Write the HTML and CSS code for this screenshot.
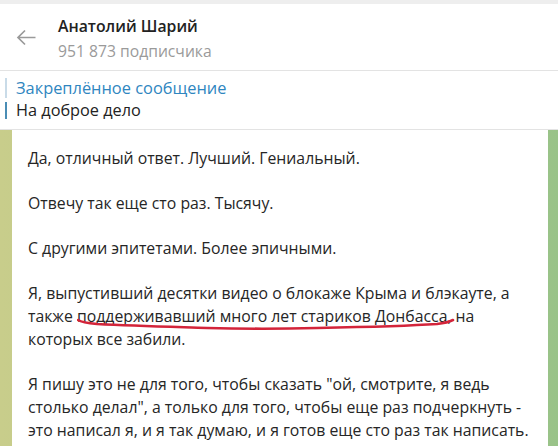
FILE: index.html
```html
<!DOCTYPE html>
<html lang="ru">
<head>
    <meta charset="UTF-8">
    <meta name="viewport" content="width=device-width, initial-scale=1.0">
    <title>Анатолий Шарий</title>
    <link rel="stylesheet" href="styles.css">
</head>
<body>

    <div class="topbar"></div>

    <div class="header">
        <div class="back">
            <svg width="20" height="17" viewBox="0 0 20 17">
                <path d="M19.5 8.5H2M9 1.5L2 8.5l7 7" fill="none" stroke="#9a9a9a" stroke-width="1.7"/>
            </svg>
        </div>
        <div class="channel">
            <div class="name">Анатолий Шарий</div>
            <div class="subs">951 873 подписчика</div>
        </div>
    </div>

    <div class="pinned">
        <div class="bars">
            <span class="bar light"></span>
            <span class="bar dark"></span>
        </div>
        <div class="pinned-text">
            <div class="pinned-title">Закреплённое сообщение</div>
            <div class="pinned-msg">На доброе дело</div>
        </div>
    </div>

    <div class="chat">
        <div class="bubble">
            <p>Да, отличный ответ. Лучший. Гениальный.</p>
            <p>Отвечу так еще сто раз. Тысячу.</p>
            <p>С другими эпитетами. Более эпичными.</p>
            <p>Я, выпустивший десятки видео о блокаже Крыма и блэкауте, а<br>
               также поддерживавший много лет стариков Донбасса, на<br>
               которых все забили.</p>
            <p>Я пишу это не для того, чтобы сказать "ой, смотрите, я ведь<br>
               столько делал", а только для того, чтобы еще раз подчеркнуть -<br>
               это написал я, и я так думаю, и я готов еще сто раз так написать.</p>

            <!-- red marker line drawn over the text -->
            <svg class="scribble" width="400" height="14" viewBox="0 0 400 14">
                <path d="M1 2 C4 4 8 5 20 6 C60 8 100 9 130 10 C170 11 200 11 240 10 C290 9 330 8 360 6 C368 5 372 4 376 2"
                      fill="none" stroke="#d3243a" stroke-width="2.6" stroke-linecap="round"/>
            </svg>
        </div>
    </div>

</body>
</html>
```

FILE: styles.css
```css
body {
    font-family: "Open Sans", "Noto Sans", sans-serif;
    margin: 0;
    padding: 0;
    width: 558px;
    height: 447px;
    overflow: hidden;
    background-color: #fff;
    color: #222;
}
.topbar {
    height: 4px;
    background-color: #eeeeee;
}
.header {
    display: flex;
    align-items: center;
    height: 66px;
    border-bottom: 1px solid #e3e3e3;
}
.back {
    width: 58px;
    padding-left: 16px;
    box-sizing: border-box;
}
.back svg {
    display: block;
}
.name {
    font-size: 15.8px;
    font-weight: 600;
    color: #222;
    line-height: 22px;
    margin-top: 2px;
}
.subs {
    font-size: 15.7px;
    color: #9a9a9a;
    line-height: 22px;
    margin-top: 3px;
}
.pinned {
    display: flex;
    height: 58px;
    border-bottom: 1px solid #e3e3e3;
    padding-left: 5px;
}
.bars {
    display: flex;
    flex-direction: column;
    gap: 4px;
    padding-top: 7px;
}
.bar {
    display: block;
    width: 2px;
    height: 20px;
}
.bar.light {
    background-color: #c9dbe8;
}
.bar.dark {
    background-color: #4a8db5;
    height: 17px;
}
.pinned-text {
    padding-left: 9px;
    padding-top: 6px;
}
.pinned-title {
    font-size: 16.4px;
    color: #2f86bf;
    line-height: 22px;
}
.pinned-msg {
    font-size: 16.3px;
    color: #222;
    line-height: 22px;
}
.chat {
    display: flex;
    height: 316px;
    padding: 0 10px 0 12px;
    background: linear-gradient(to right, #c8cd8b, #b5c98a 50%, #99c389);
}
.bubble {
    position: relative;
    flex: 1;
    background-color: #fff;
    padding: 17px 10px 0 16px;
}
.bubble p {
    margin: 0 0 22px 0;
    font-size: 15.8px;
    line-height: 23px;
    color: #262626;
    white-space: nowrap;
}
.scribble {
    position: absolute;
    left: 65px;
    top: 188px;
}
```
